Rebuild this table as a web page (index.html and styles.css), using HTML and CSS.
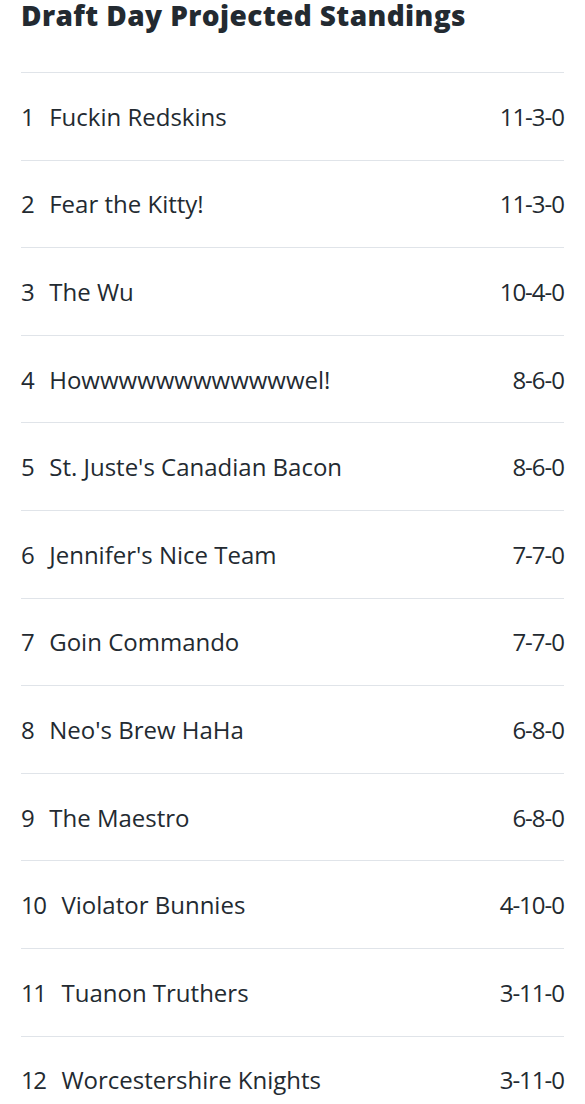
FILE: index.html
```html
<!DOCTYPE html>
<html lang="en">

<head>
    <meta charset="UTF-8">
    <meta name="viewport" content="width=device-width, initial-scale=1.0">
    <title>Draft Day Projected Standings</title>
    <link rel="stylesheet" href="styles.css">
</head>

<body>
    <div class="container">
        <h1>Draft Day Projected Standings</h1>

        <!-- Standings list -->
        <ul class="standings">
            <li><span class="rank">1</span><span class="team">Fuckin Redskins</span><span class="record">11-3-0</span></li>
            <li><span class="rank">2</span><span class="team">Fear the Kitty!</span><span class="record">11-3-0</span></li>
            <li><span class="rank">3</span><span class="team">The Wu</span><span class="record">10-4-0</span></li>
            <li><span class="rank">4</span><span class="team">Howwwwwwwwwwwwel!</span><span class="record">8-6-0</span></li>
            <li><span class="rank">5</span><span class="team">St. Juste's Canadian Bacon</span><span class="record">8-6-0</span></li>
            <li><span class="rank">6</span><span class="team">Jennifer's Nice Team</span><span class="record">7-7-0</span></li>
            <li><span class="rank">7</span><span class="team">Goin Commando</span><span class="record">7-7-0</span></li>
            <li><span class="rank">8</span><span class="team">Neo's Brew HaHa</span><span class="record">6-8-0</span></li>
            <li><span class="rank">9</span><span class="team">The Maestro</span><span class="record">6-8-0</span></li>
            <li><span class="rank">10</span><span class="team">Violator Bunnies</span><span class="record">4-10-0</span></li>
            <li><span class="rank">11</span><span class="team">Tuanon Truthers</span><span class="record">3-11-0</span></li>
            <li><span class="rank">12</span><span class="team">Worcestershire Knights</span><span class="record">3-11-0</span></li>
        </ul>
    </div>
</body>

</html>
```

FILE: styles.css
```css
body {
    margin: 0;
    padding: 0;
    background-color: #fff;
    font-family: 'Open Sans', 'Noto Sans', sans-serif;
    color: #232a31;
}

.container {
    padding: 0 21px;
}

h1 {
    margin: 0;
    height: 72px;
    font-size: 28px;
    font-weight: 800;
    line-height: 31px;
    letter-spacing: 0.4px;
}

.standings {
    list-style: none;
    margin: 0;
    padding: 0;
}

.standings li {
    display: flex;
    align-items: center;
    height: 87.6px;
    box-sizing: border-box;
    border-top: 1px solid #e0e4e9;
    font-size: 24px;
}

.rank {
    margin-right: 16px;
    letter-spacing: -1.5px;
}

.team {
    flex: 1;
}

.record {
    text-align: right;
    letter-spacing: -1px;
}
```
